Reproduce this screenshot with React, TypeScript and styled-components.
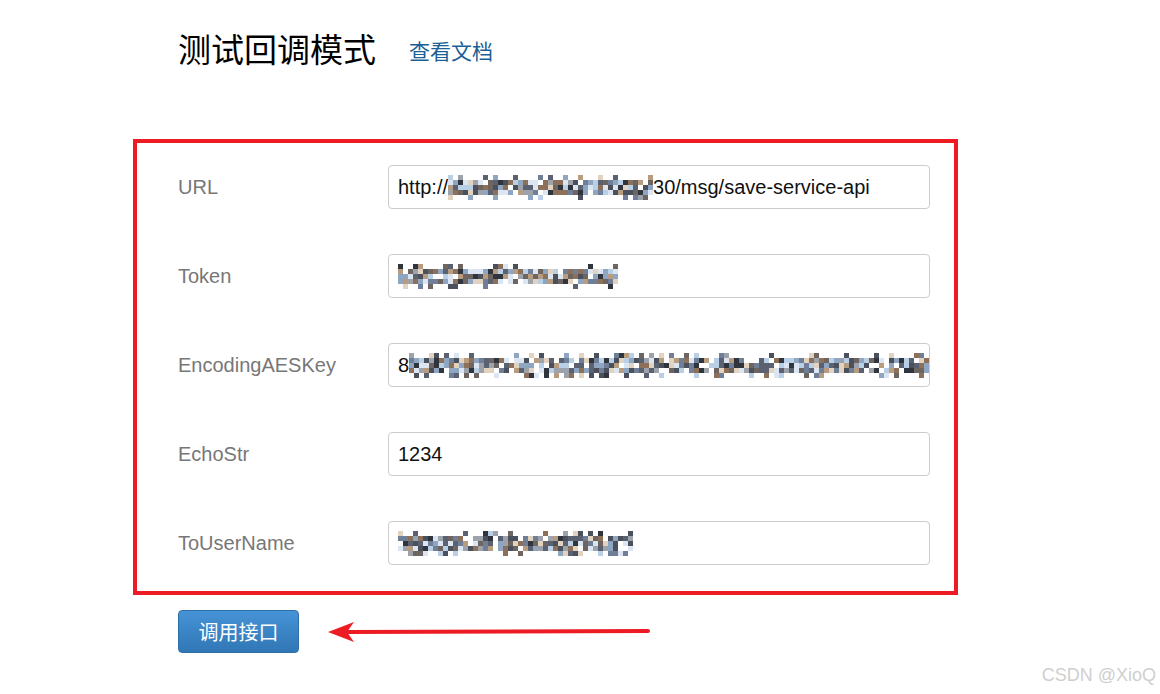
import React from 'react';
import styled, { createGlobalStyle } from 'styled-components';

const GlobalStyle = createGlobalStyle`
  html, body {
    margin: 0;
    padding: 0;
    background: #fff;
    height: 100%;
  }
  #root {
    min-height: 100%;
  }
`;

const PALETTE = ['#30343c', '#4a505c', '#5a6272', '#6f7f98', '#8fa6c2', '#b9cfe6', '#8c705a', '#b89c80', '#e2d2c0', '#6e6460', '#9ea2aa', '#dbe6f2'];

// deterministic pseudo random so the mosaic stays the same on every render
const seeded = (seed: number) => {
  let s = seed;
  return () => {
    s = (s * 16807) % 2147483647;
    return (s - 1) / 2147483646;
  };
};

type MosaicProps = { width: number; seed: number; cell?: number };

const Mosaic = ({ width, seed, cell = 5 }: MosaicProps) => {
  const rand = seeded(seed);
  const cols = Math.floor(width / cell);
  const rows = 5;
  const rects: React.ReactNode[] = [];
  for (let r = 0; r < rows; r++) {
    for (let c = 0; c < cols; c++) {
      const edge = r === 0 || r === rows - 1;
      if (rand() > (edge ? 0.3 : 0.9)) continue;
      const color = PALETTE[Math.floor(rand() * PALETTE.length)];
      rects.push(<rect key={`${r}-${c}`} x={c * cell} y={r * cell} width={cell} height={cell} fill={color} />);
    }
  }
  return (
    <MosaicSvg width={cols * cell} height={rows * cell} viewBox={`0 0 ${cols * cell} ${rows * cell}`}>
      {rects}
    </MosaicSvg>
  );
};

const fields = [
  { label: 'URL', before: 'http://', mosaic: 208, after: '30/msg/save-service-api', seed: 11 },
  { label: 'Token', before: '', mosaic: 222, after: '', seed: 23 },
  { label: 'EncodingAESKey', before: '8', mosaic: 530, after: '', seed: 37 },
  { label: 'EchoStr', before: '1234', mosaic: 0, after: '', seed: 0 },
  { label: 'ToUserName', before: '', mosaic: 235, after: '', seed: 51 },
];

export default function App() {
  return (
    <>
      <GlobalStyle />
      <Page>
        <Header>
          <Title>测试回调模式</Title>
          <DocLink href="#">查看文档</DocLink>
        </Header>
        <Highlight>
          {fields.map((f) => (
            <Row key={f.label}>
              <Label>{f.label}</Label>
              <Field>
                {f.before && <span>{f.before}</span>}
                {f.mosaic > 0 && <Mosaic width={f.mosaic} seed={f.seed} />}
                {f.after && <span>{f.after}</span>}
              </Field>
            </Row>
          ))}
        </Highlight>
        <Actions>
          <Button>调用接口</Button>
          <Arrow width="324" height="20" viewBox="0 0 324 20">
            <line x1="20" y1="10" x2="320" y2="9" stroke="#ed1c24" strokeWidth="4" strokeLinecap="round" />
            <path d="M0 10 L26 0 L19 10 L26 20 Z" fill="#ed1c24" />
          </Arrow>
        </Actions>
        <Watermark>CSDN @XioQ</Watermark>
      </Page>
    </>
  );
}

const Page = styled.div`
  position: relative;
  height: 694px;
  padding: 28px 0 0 133px;
  box-sizing: border-box;
  font-family: 'Liberation Sans', 'Noto Sans CJK SC', sans-serif;
  overflow: hidden;
`;

const Header = styled.div`
  display: flex;
  align-items: center;
  gap: 33px;
  padding-left: 45px;
  height: 40px;
`;

const Title = styled.h1`
  margin: 0;
  font-family: 'Noto Sans CJK SC', sans-serif;
  font-weight: 400;
  font-size: 33px;
  line-height: 40px;
  color: #000;
`;

const DocLink = styled.a`
  font-family: 'Noto Sans CJK SC', sans-serif;
  font-size: 21px;
  line-height: 40px;
  margin-top: 4px;
  color: #1a5f96;
  text-decoration: none;
`;

const Highlight = styled.div`
  margin-top: 71px;
  width: 825px;
  height: 456px;
  box-sizing: border-box;
  border: 4px solid #ed1c24;
  padding: 22px 24px 0 41px;
  display: flex;
  flex-direction: column;
  gap: 45px;
`;

const Row = styled.div`
  display: flex;
  align-items: center;
  height: 44px;
`;

const Label = styled.div`
  width: 210px;
  flex: 0 0 210px;
  font-size: 20px;
  color: #777;
`;

const Field = styled.div`
  flex: 1;
  height: 44px;
  box-sizing: border-box;
  border: 1px solid #ccc;
  border-radius: 4px;
  padding: 0 9px;
  display: flex;
  align-items: center;
  overflow: hidden;
  white-space: nowrap;
  font-size: 20px;
  color: #111;
`;

const MosaicSvg = styled.svg`
  flex: 0 0 auto;
  display: block;
`;

const Actions = styled.div`
  display: flex;
  align-items: center;
  gap: 29px;
  margin-top: 15px;
  padding-left: 45px;
`;

const Button = styled.button`
  width: 121px;
  height: 43px;
  border: 1px solid #2f6fa8;
  border-radius: 4px;
  background: linear-gradient(to bottom, #4693d6 0%, #3077b6 100%);
  color: #fff;
  font-family: 'Noto Sans CJK SC', sans-serif;
  font-size: 20px;
  padding: 0;
  cursor: pointer;
`;

const Arrow = styled.svg`
  display: block;
`;

const Watermark = styled.div`
  position: absolute;
  right: 4px;
  bottom: 8px;
  font-size: 18px;
  color: #cfcfcf;
`;
